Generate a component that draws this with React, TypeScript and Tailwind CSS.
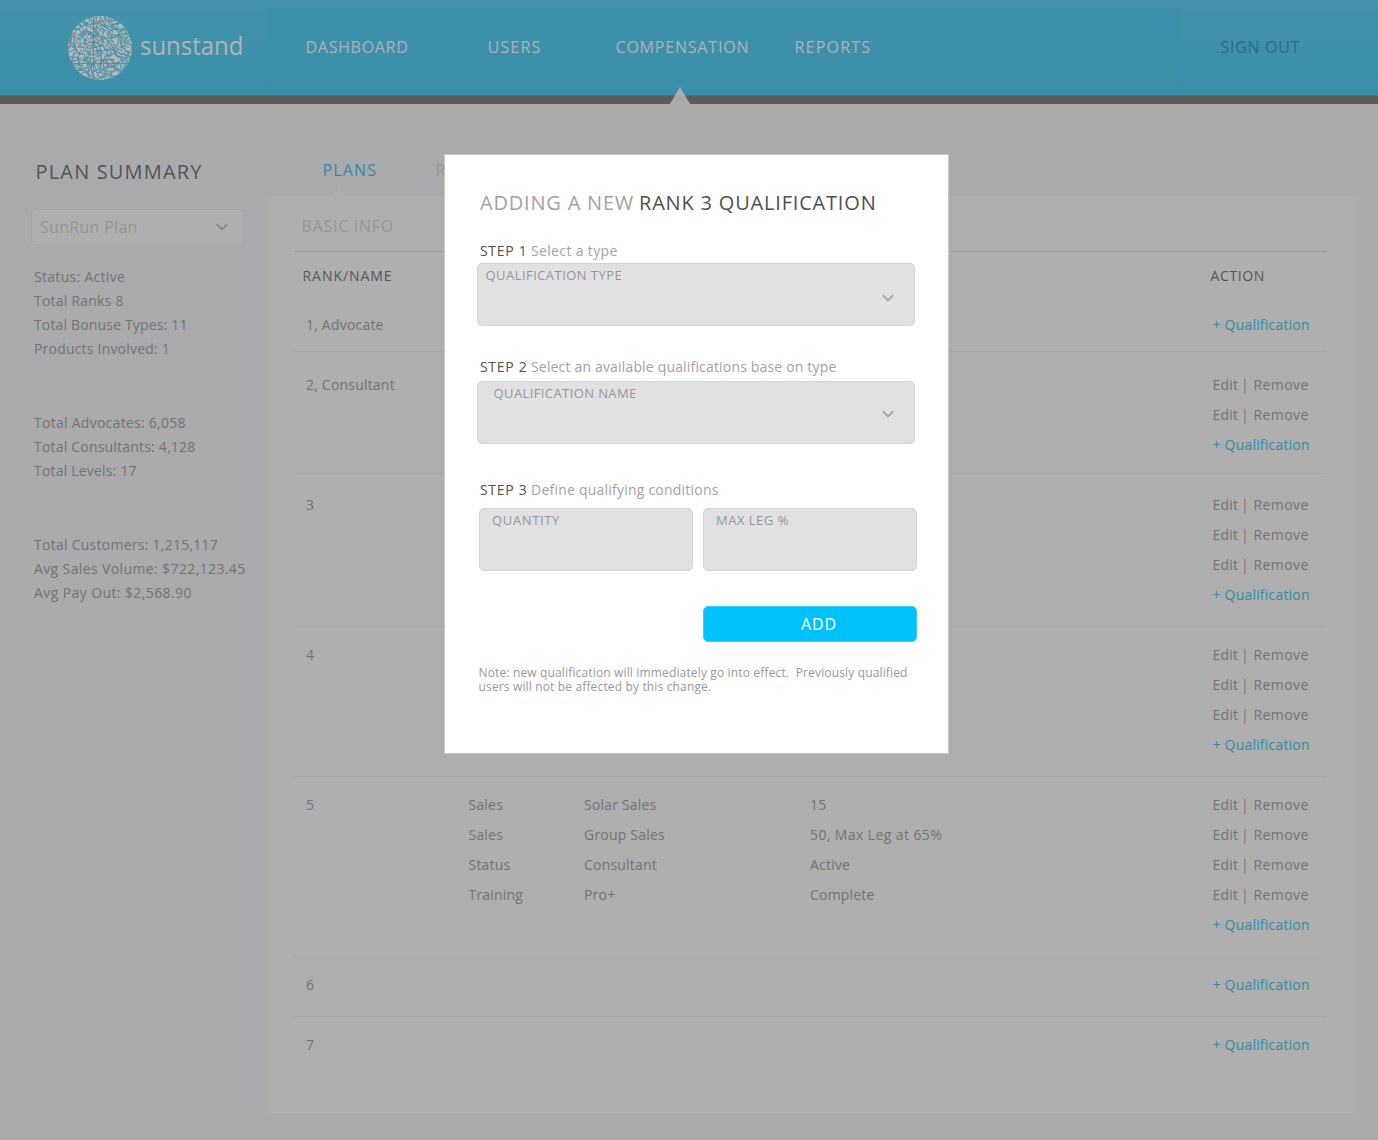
import React from "react";

const ACCENT = "text-[#338ca8]";

/* Woven-sphere mark: short strands at random angles, spread evenly over a disc. */
function strands() {
  let seed = 4177;
  const rnd = () => {
    seed = (seed * 16807) % 2147483647;
    return seed / 2147483647;
  };
  const out: string[] = [];
  const cells = 19;
  const step = 64 / cells;
  for (let r = 0; r < cells; r++) {
    for (let c = 0; c < cells; c++) {
      const x = (c + rnd()) * step;
      const y = (r + rnd()) * step;
      const a = rnd() * Math.PI;
      const l = 2.5 + rnd() * 3.5;
      const dx = Math.cos(a) * l;
      const dy = Math.sin(a) * l;
      out.push(
        `M${(x - dx).toFixed(1)} ${(y - dy).toFixed(1)}L${(x + dx).toFixed(1)} ${(y + dy).toFixed(1)}`
      );
    }
  }
  return out.join("");
}
const STRANDS = strands();

function Logo() {
  return (
    <div className="flex h-24 w-[306px] shrink-0 items-center pl-[68px]">
      <svg width="64" height="64" viewBox="0 0 64 64" className="shrink-0">
        <defs>
          <clipPath id="disc">
            <circle cx="32" cy="32" r="32" />
          </clipPath>
        </defs>
        <g clipPath="url(#disc)">
          <rect width="64" height="64" fill="#b8b6b6" />
          <path d={STRANDS} stroke="#3f91aa" strokeWidth="0.85" />
          <path d="M0 47.5H64M25.5 0V64" stroke="#3f91aa" strokeWidth="0.8" />
        </g>
      </svg>
      <span className="ml-[7.5px] origin-left scale-x-[0.92] pb-[7px] text-[26px] leading-[30px] text-[#b2b2b2]">
        sunstand
      </span>
    </div>
  );
}

function Chevron({ className = "" }: { className?: string }) {
  return (
    <svg width="12" height="8" viewBox="0 0 12 8" fill="none" className={className}>
      <path d="M0.8 1.2L6 6.4L11.2 1.2" stroke="currentColor" strokeWidth="1.8" />
    </svg>
  );
}

function Header() {
  return (
    <header className="relative h-[104px] border-b-8 border-[#5a5a5a] bg-[linear-gradient(#4592ac,#3d90aa_60px,#3a8fab_95px,#3f7485_95px)]">
      <div className="flex h-24 items-center bg-[linear-gradient(#3c90aa,#3c90aa)] bg-[length:912px_80px] bg-[position:268px_8px] bg-no-repeat text-base leading-6 text-[#b0b0b0]">
        <Logo />
        <nav className="-ml-[0.5px] flex h-[94px] items-center self-start">
          <span className="w-[182px] tracking-[0.7px]">DASHBOARD</span>
          <span className="w-[128px] tracking-[1.2px]">USERS</span>
          <span className="w-[179px] tracking-[0.8px]">COMPENSATION</span>
          <span className="w-[426px] tracking-[1.2px]">REPORTS</span>
          <span className="tracking-[0.7px] text-[#2e6d80]">SIGN OUT</span>
        </nav>
      </div>
      <svg width="20" height="17" viewBox="0 0 20 17" className="absolute left-[670px] top-[87px]">
        <path d="M10 0L20 17H0Z" fill="#ababad" />
      </svg>
    </header>
  );
}

const STATS: [string, string][][] = [
  [
    ["Status: Active", "tracking-[0.3px]"],
    ["Total Ranks 8", "tracking-[0.22px]"],
    ["Total Bonuse Types: 11", "tracking-[0.16px]"],
    ["Products Involved: 1", "tracking-[0.2px]"],
  ],
  [
    ["Total Advocates: 6,058", "tracking-[0.27px]"],
    ["Total Consultants: 4,128", "tracking-[0.2px]"],
    ["Total Levels: 17", "tracking-[0.2px]"],
  ],
  [
    ["Total Customers: 1,215,117", "tracking-[0.26px]"],
    ["Avg Sales Volume: $722,123.45", "tracking-[0.38px]"],
    ["Avg Pay Out: $2,568.90", "tracking-[0.4px]"],
  ],
];

function Sidebar() {
  return (
    <aside className="w-[268px] shrink-0 pl-[31px] pt-14">
      <h2 className="pl-[4.5px] text-[20px] leading-6 tracking-[1.17px] text-[#555555]">PLAN SUMMARY</h2>
      <div className="mt-[25px] flex h-9 w-[214px] items-center justify-between rounded-[5px] border border-[#a6a6a6] bg-[#aeaeae] pl-2 pr-4">
        <span className="text-base leading-6 tracking-[0.3px] text-[#959595]">SunRun Plan</span>
        <Chevron className="text-[#888888]" />
      </div>
      <div className="mt-5 flex flex-col gap-[50px] pl-[3px] text-sm leading-6 text-[#747474]">
        {STATS.map((group, i) => (
          <div key={i} className="flex flex-col whitespace-nowrap">
            {group.map(([text, track]) => (
              <span key={text} className={track}>
                {text}
              </span>
            ))}
          </div>
        ))}
      </div>
    </aside>
  );
}

type Rank = { name: string; pad: string; edits: number; details?: string[][] };

const RANKS: Rank[] = [
  { name: "1, Advocate", pad: "pt-[10px] pb-[11px] border-b", edits: 0 },
  { name: "2, Consultant", pad: "pt-[18px] pb-[13px] border-b", edits: 2 },
  { name: "3", pad: "pt-4 pb-4 border-b", edits: 3 },
  { name: "4", pad: "pt-[13px] pb-4 border-b", edits: 3 },
  {
    name: "5",
    pad: "pt-[13px] pb-4 border-b",
    edits: 4,
    details: [
      ["Sales", "Solar Sales", "15"],
      ["Sales", "Group Sales", "50, Max Leg at 65%"],
      ["Status", "Consultant", "Active"],
      ["Training", "Pro+", "Complete"],
    ],
  },
  { name: "6", pad: "pt-[13px] pb-4 border-b", edits: 0 },
  { name: "7", pad: "pt-[13px]", edits: 0 },
];

function RankRow({ rank }: { rank: Rank }) {
  return (
    <div className={`flex border-[#a7a7a7] pl-3 text-sm leading-[30px] tracking-[0.2px] text-[#747474] ${rank.pad}`}>
      <span className="w-[162.5px]">{rank.name}</span>
      <div className="w-[744px]">
        {(rank.details ?? []).map((cells, i) => (
          <div key={i} className="flex">
            <span className="w-[115.5px]">{cells[0]}</span>
            <span className="w-[226px]">{cells[1]}</span>
            <span className={cells[2].length > 10 ? "tracking-[0.4px]" : ""}>{cells[2]}</span>
          </div>
        ))}
      </div>
      <div className="flex flex-col whitespace-nowrap">
        {Array.from({ length: rank.edits }, (_, i) => (
          <span key={i} className="flex">
            <span className="w-[26px]">Edit</span>
            <span className="w-[15px] pl-[2.5px]">|</span>
            <span className="tracking-[0.4px]">Remove</span>
          </span>
        ))}
        <span className={ACCENT}>+ Qualification</span>
      </div>
    </div>
  );
}

function Plans() {
  return (
    <main className="w-[1090px] shrink-0">
      <div className="relative flex h-[92px] pl-[54.5px] pt-[54px] text-base leading-6">
        <span className={`w-[113px] tracking-[1.15px] ${ACCENT}`}>PLANS</span>
        <span className="tracking-[1.2px] text-[#959597]">RANKS</span>
        <svg width="12" height="8" viewBox="0 0 12 8" className="absolute bottom-0 left-[65px]">
          <path d="M6 0L12 8H0Z" fill="#aeaeae" />
        </svg>
      </div>
      <section className="h-[917px] bg-[#aeaeae] pl-[26px] pr-8">
        <div className="h-14 border-b border-[#9c9c9c] pl-[7.5px] pt-[18px] text-base leading-6 tracking-[0.74px] text-[#969696]">
          BASIC INFO
        </div>
        <div className="flex h-12 pl-[8.5px] pt-3 text-sm leading-6 text-[#575757]">
          <span className="w-[908px] tracking-[0.95px]">RANK/NAME</span>
          <span className="tracking-[0.63px]">ACTION</span>
        </div>
        {RANKS.map((rank) => (
          <RankRow key={rank.name} rank={rank} />
        ))}
      </section>
    </main>
  );
}

function StepTitle({ n, text, track }: { n: number; text: string; track: string }) {
  return (
    <p className="flex pl-[3px] text-sm leading-5 text-[#a2a2a2]">
      <span className="w-[51px] tracking-[0.68px] text-[#505050]">STEP {n}</span>
      <span className={track}>{text}</span>
    </p>
  );
}

const FIELD =
  "flex h-[63px] shrink-0 rounded-[5px] border border-[#d3d3d4] bg-[#e1e1e3] pt-[1px] text-[13px] leading-5 text-[#959899]";

function Modal() {
  return (
    <div className="absolute left-[444px] top-[154px] h-[600px] w-[505px] border border-[#c6c6c6] bg-white pl-8 pr-[33px] pt-9">
      <h1 className="flex pl-[3px] text-[20px] leading-6 whitespace-nowrap">
        <span className="w-[159px] tracking-[0.8px] text-[#a2a2a2]">ADDING A NEW</span>
        <span className="tracking-[0.81px] text-[#505050]">RANK 3 QUALIFICATION</span>
      </h1>
      <div className="mt-[26px]">
        <StepTitle n={1} text="Select a type" track="tracking-[0.35px]" />
        <div className={`${FIELD} mt-[2px] justify-between pl-[7.5px] pr-[20.5px]`}>
          <span className="tracking-[0.45px]">QUALIFICATION TYPE</span>
          <Chevron className="mt-[29px] text-[#a6a6a8]" />
        </div>
      </div>
      <div className="mt-[31px]">
        <StepTitle
          n={2}
          text="Select an available qualifications base on type"
          track="tracking-[0.17px]"
        />
        <div className={`${FIELD} mt-1 justify-between pl-[15.5px] pr-[20.5px]`}>
          <span className="tracking-[0.4px]">QUALIFICATION NAME</span>
          <Chevron className="mt-[27px] text-[#a6a6a8]" />
        </div>
      </div>
      <div className="mt-9">
        <StepTitle n={3} text="Define qualifying conditions" track="tracking-[0.22px]" />
        <div className="ml-[2px] mt-2 flex gap-[10px]">
          <div className={`${FIELD} w-[214px] pl-3`}>
            <span className="tracking-[0.65px]">QUANTITY</span>
          </div>
          <div className={`${FIELD} w-[214px] pl-3`}>
            <span className="tracking-[0.5px]">MAX LEG %</span>
          </div>
        </div>
      </div>
      <button className="ml-[226px] mt-[35px] flex h-9 w-[214px] rounded-[5px] border border-[#3dcdf8] bg-[#00c2f8] pl-[97px] pt-[5px] text-base leading-6 tracking-[0.9px] text-white">
        ADD
      </button>
      <p className="mt-6 pl-[1.5px] text-xs leading-[14px] whitespace-pre tracking-[0.15px] text-[#999999]">
        {
          "Note: new qualification will immediately go into effect.  Previously qualified\nusers will not be affected by this change."
        }
      </p>
    </div>
  );
}

export default function App() {
  return (
    <div className="relative h-[1140px] w-[1378px] overflow-hidden bg-[#aaaaac] font-['Open_Sans',sans-serif]">
      <Header />
      <div className="flex">
        <Sidebar />
        <Plans />
      </div>
      <Modal />
    </div>
  );
}
